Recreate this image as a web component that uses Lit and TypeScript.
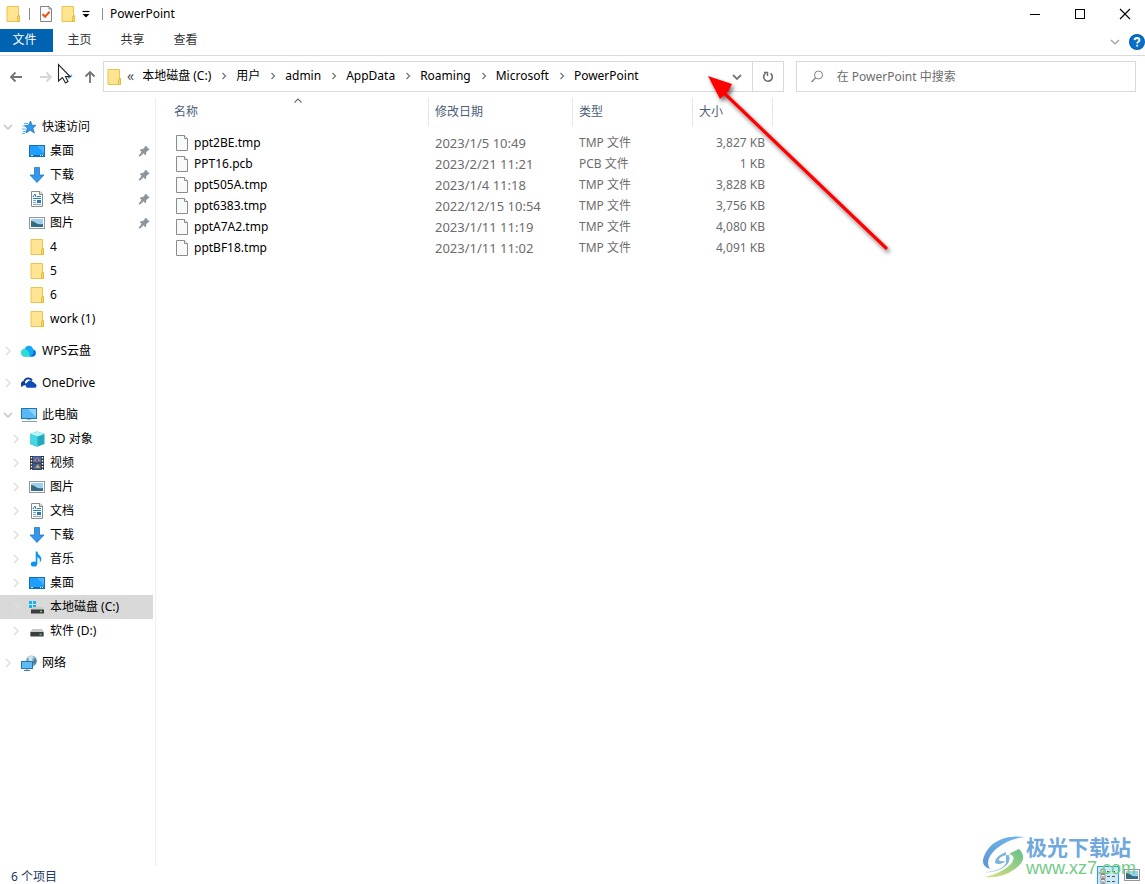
import { LitElement, html, svg, css, nothing } from "lit";
import { customElement, property, state } from "lit/decorators.js";
import { classMap } from "lit/directives/class-map.js";

type IconName =
  | "folder" | "check" | "star" | "desktop" | "down" | "doc" | "picture" | "wps" | "onedrive"
  | "pc" | "cube" | "video" | "music" | "drivec" | "drived" | "network" | "file" | "pin"
  | "back" | "forward" | "recent" | "up" | "chevDown" | "chevRight" | "chevUp" | "ribbon" | "refresh"
  | "search" | "min" | "max" | "close" | "help" | "menu" | "crumb" | "details" | "dropdown";

const ICONS: Record<IconName, unknown> = {
  folder: svg`<path d="M2 0.5H13.5V10L14.5 10V15.5H2Z" fill="#ffe491" stroke="#e8c64b"/><path d="M12.5 15.5V10.5L14.5 9.5V15.5Z" fill="#f7d868" stroke="#e3bd3d"/>`,
  check: svg`<path d="M2.5 0.5H11L13.5 3V15.5H2.5Z" fill="#fafafa" stroke="#858585"/><path d="M11 .5V3H13.5" fill="none" stroke="#858585"/><path d="M4.5 8L7 10.8L11.6 5.8" fill="none" stroke="#e8561c" stroke-width="2"/>`,
  star: svg`<path d="M9.5 2L11 6.2L15 6.4L11.8 9L13.4 14L9.2 11.2L5 14L6.4 9L3.4 6.6L7.6 6.2Z" fill="#2f9be8" stroke="#1d74c0" stroke-width=".8"/><path d="M3 4.5H7M1.5 7H5M1 10H5M2 12.5H5M1 14.5H4" stroke="#58b4f0" stroke-width="1"/>`,
  desktop: svg`<rect x=".5" y="2.500" width="15" height="11" fill="#1e9fff" stroke="#0f70b8"/><path d="M8 3H15V10Z" fill="#4db5ff"/><path d="M1 12.500H15" stroke="#0b6bb0"/><path d="M2 12.500H4M11 12.500H12M13 12.500H14" stroke="#fff"/>`,
  down: svg`<path d="M5.500 .5H10.500V8H15L8 15.500L1 8H5.500Z" fill="#3398ec" stroke="#2278c2" stroke-width=".8"/>`,
  doc: svg`<path d="M2.500 .5H11L13.500 3V15.500H2.500Z" fill="#fdfdfd" stroke="#8a8a8a"/><path d="M10.500 .5V3.500H13.500" fill="#ddd" stroke="#8a8a8a"/><path d="M4 6L6 3L7 6M8 5.500H12M4 7.500H12" stroke="#2283c6" fill="none"/><path d="M4 9.500H7M4 11.500H7M4 13.500H12" stroke="#87a5bd"/><rect x="8" y="9" width="4" height="3" fill="#2f78b5"/>`,
  picture: svg`<rect x=".5" y="2.500" width="15" height="11" fill="#fff" stroke="#969696"/><rect x="2" y="4" width="12" height="8" fill="#9bd0f3"/><path d="M2 6Q5 6 7 8T14 9V12H2Z" fill="#386f69"/><path d="M2 10.500Q8 9 14 10.500V12H2Z" fill="#326a9e"/>`,
  wps: svg`<path d="M4.500 13.500A3.800 3.800 0 0 1 3.600 6Q5 2.500 8.200 2.700Q11.500 3 12.200 6.500A3.600 3.600 0 0 1 11.800 13.500Z" fill="#14a9f6"/><path d="M4 13.500A3.700 3.700 0 0 1 3.500 6Q8 6 9 13.500Z" fill="#2edbd5"/><path d="M8 13.500Q14 12 12.300 6.600A3.600 3.600 0 0 1 12 13.500Z" fill="#0867df"/>`,
  onedrive: svg`<path d="M1.200 11.500A3 3 0 0 1 3 6.700Q4.300 3 8 3.500Q10 3.600 11 5.500" fill="none" stroke="#123f96" stroke-width="1.800"/><path d="M6 12.700A3 3 0 0 1 6 7.500Q8.500 4 11.800 7Q13 6.900 13.500 8.200A2.500 2.500 0 0 1 14.500 12.700Z" fill="#0b4db5"/><path d="M1 11A3 3 0 0 1 4 7L5 10Z" fill="#123f96"/>`,
  pc: svg`<rect x=".5" y="1.500" width="15" height="10" fill="#57b8f8" stroke="#2674a8"/><path d="M7 2H15V10Z" fill="#8fd2ff"/><path d="M6 12H10V13H6Z" fill="#a0b5c1"/><path d="M1 14.500H16" stroke="#7fa0b5"/>`,
  cube: svg`<path d="M1 3L8 .5L15.500 3V13L8 15.800L1 13Z" fill="#22a9bd"/><path d="M1 3L8 .5L15.500 3L8.500 5.500Z" fill="#b4f3f6"/><path d="M1 3L8.500 5.500V15.500L1 13Z" fill="#47d7e1"/>`,
  video: svg`<rect x="1" y="1" width="14" height="14" fill="#333"/><rect x="4" y="1.500" width="8" height="6" fill="#496fc5"/><rect x="4" y="8.500" width="8" height="6" fill="#365cb1"/><path d="M5 6L8 3L11 6ZM6 13L9 9L11 13Z" fill="#d6a52a"/><path d="M2.500 2V15M13.500 2V15" stroke="#fff" stroke-width="1.400" stroke-dasharray="1.500 1.500"/><path d="M7 4H9V6H7Z" fill="#b93b34"/>`,
  music: svg`<ellipse cx="5" cy="13" rx="3.200" ry="2.600" fill="#0a95f0"/><path d="M6.700 13V.5H8.400Q8.500 3 11 4.800Q14 8 10.500 12Q12 7.500 8.400 6V13Z" fill="#0a95f0"/>`,
  drivec: svg`<path d="M0 2H3V5H0ZM4 2H7V5H4ZM0 6H3V9H0ZM4 6H7V9H4Z" fill="#12b4ef"/><path d="M2 10L4 8H13L15 10.500V14H2Z" fill="#c9c9c9"/><rect x="2" y="10.500" width="13" height="4" fill="#393d3f"/><path d="M11 12.500H13" stroke="#5dd15a" stroke-width="1.500"/>`,
  drived: svg`<path d="M1 9L3.500 6H13L15 9V13H1Z" fill="#c9c9c9"/><rect x="1.500" y="9" width="13" height="4.500" fill="#3b3e40"/><path d="M10.500 11.500H12.500" stroke="#5dd15a" stroke-width="1.500"/>`,
  network: svg`<circle cx="10.500" cy="6" r="5.500" fill="#7fa9c3"/><path d="M7 2Q10 0 13 2L11 4L12 7L9 9L8 5Z" fill="#cfe5ed"/><path d="M14 3Q17 7 13 10L12 7Z" fill="#477e9d"/><rect x=".5" y="6.500" width="11" height="7" fill="#5bbdf9" stroke="#2775ab"/><path d="M3 15.500H9M6 13V15" stroke="#397eac"/>`,
  file: svg`<path d="M2.500 .5H10.500L13.500 3.500V15.500H2.500Z" fill="#f8f9fb" stroke="#8b8b8b"/><path d="M10.500 .5V3.500H13.500" fill="#fff" stroke="#8b8b8b"/>`,
  pin: svg`<path d="M9.500 3L13 6.500L11.800 7L9.800 9L9.500 11.800L7.500 10L3.800 13.200L3 13L6.200 8.800L4.300 7L7 6.500L9 4.500Z" fill="#8a949e" stroke="#8a949e" stroke-linejoin="round"/>`,
  back: svg`<path d="M14 8H3M7.500 3.500L3 8L7.500 12.500" fill="none" stroke="#737373" stroke-width="1.800"/>`,
  forward: svg`<path d="M2 8H13M8.500 3.500L13 8L8.500 12.500" fill="none" stroke="#d6d6d6" stroke-width="1.800"/>`,
  recent: svg`<path d="M5 6L8 9L11 6" fill="none" stroke="#4a9ae8" stroke-width="1.500"/>`,
  up: svg`<path d="M8 14V3M3.500 7.500L8 3L12.500 7.500" fill="none" stroke="#737373" stroke-width="1.800"/>`,
  chevDown: svg`<path d="M4 6L8 10L12 6" fill="none" stroke="#c4c4c4" stroke-width="1.500"/>`,
  chevRight: svg`<path d="M6 4L10 8L6 12" fill="none" stroke="#dedede" stroke-width="1.500"/>`,
  chevUp: svg`<path d="M4.500 9.500L8 6L11.500 9.500" fill="none" stroke="#6a6a6a" stroke-width="1.100"/>`,
  ribbon: svg`<path d="M4 6L8 10L12 6" fill="none" stroke="#9b9b9b" stroke-width="1.200"/>`,
  dropdown: svg`<path d="M4 6L8 10L12 6" fill="none" stroke="#777" stroke-width="1.800"/>`,
  refresh: svg`<path d="M10.600 4.500A4.300 4.300 0 1 1 5.500 4.400" fill="none" stroke="#6d6d6d" stroke-width="1.600"/><path d="M4 3.500H7.500V7" fill="none" stroke="#6d6d6d" stroke-width="1.500"/>`,
  search: svg`<circle cx="9.500" cy="6" r="4" fill="none" stroke="#857f86"/><path d="M6.500 9L2.500 13" stroke="#857f86" stroke-width="1.200"/>`,
  min: svg`<path d="M3 8.500H13" stroke="#000"/>`,
  max: svg`<rect x="3.500" y="3.500" width="9" height="9" fill="none" stroke="#000"/>`,
  close: svg`<path d="M3 3L13 13M13 3L3 13" stroke="#000" stroke-width="1.100"/>`,
  help: svg`<circle cx="8" cy="8" r="8" fill="#0063b1"/><circle cx="8" cy="8" r="6.800" fill="#0a6fca"/><path d="M5.500 6.200Q5.700 4 8.100 4Q10.500 4.100 10.500 6.100Q10.400 7.200 9.100 7.900Q8.200 8.500 8.200 9.500M8.200 10.800V12.500" fill="none" stroke="#fff" stroke-width="1.800"/>`,
  menu: svg`<path d="M4.500 5.500H11.500" stroke="#000" stroke-width="1.200"/><path d="M4.500 8H11.500L8 11.500Z" fill="#000"/>`,
  crumb: svg`<path d="M6.500 5L9.500 8L6.500 11" fill="none" stroke="#777" stroke-width="1.300"/>`,
  details: svg`<path d="M1 1.500H5V5.500H1ZM1 6.500H5V10.500H1ZM1 11.500H5V15.500H1Z" fill="#fff" stroke="#8b8b8b"/><path d="M3 3V5" stroke="#4a9d43"/><path d="M3 8V10" stroke="#c43e3e"/><path d="M3 13V15" stroke="#3970b7"/><path d="M7 3.500H10M12 3.500H15M7 8.500H10M12 8.500H15M7 13.500H10M12 13.500H15" stroke="#555"/>`,
};

const icon = (name: IconName) =>
  html`<svg class="icon" viewBox="0 0 16 16" width="16" height="16" aria-hidden="true">${ICONS[name]}</svg>`;

interface NavItem {
  label: string;
  icon: IconName;
  level: 0 | 1;
  arrow?: "open" | "closed";
  pinned?: boolean;
}

const GROUPS: NavItem[][] = [
  [
    { label: "快速访问", icon: "star", level: 0, arrow: "open" },
    { label: "桌面", icon: "desktop", level: 1, pinned: true },
    { label: "下载", icon: "down", level: 1, pinned: true },
    { label: "文档", icon: "doc", level: 1, pinned: true },
    { label: "图片", icon: "picture", level: 1, pinned: true },
    { label: "4", icon: "folder", level: 1 },
    { label: "5", icon: "folder", level: 1 },
    { label: "6", icon: "folder", level: 1 },
    { label: "work (1)", icon: "folder", level: 1 },
  ],
  [{ label: "WPS云盘", icon: "wps", level: 0, arrow: "closed" }],
  [{ label: "OneDrive", icon: "onedrive", level: 0, arrow: "closed" }],
  [
    { label: "此电脑", icon: "pc", level: 0, arrow: "open" },
    { label: "3D 对象", icon: "cube", level: 1, arrow: "closed" },
    { label: "视频", icon: "video", level: 1, arrow: "closed" },
    { label: "图片", icon: "picture", level: 1, arrow: "closed" },
    { label: "文档", icon: "doc", level: 1, arrow: "closed" },
    { label: "下载", icon: "down", level: 1, arrow: "closed" },
    { label: "音乐", icon: "music", level: 1, arrow: "closed" },
    { label: "桌面", icon: "desktop", level: 1, arrow: "closed" },
    { label: "本地磁盘 (C:)", icon: "drivec", level: 1, arrow: "closed" },
    { label: "软件 (D:)", icon: "drived", level: 1, arrow: "closed" },
  ],
  [{ label: "网络", icon: "network", level: 0, arrow: "closed" }],
];

const FILES = [
  ["ppt2BE.tmp", "2023/1/5 10:49", "TMP 文件", "3,827 KB"],
  ["PPT16.pcb", "2023/2/21 11:21", "PCB 文件", "1 KB"],
  ["ppt505A.tmp", "2023/1/4 11:18", "TMP 文件", "3,828 KB"],
  ["ppt6383.tmp", "2022/12/15 10:54", "TMP 文件", "3,756 KB"],
  ["pptA7A2.tmp", "2023/1/11 11:19", "TMP 文件", "4,080 KB"],
  ["pptBF18.tmp", "2023/1/11 11:02", "TMP 文件", "4,091 KB"],
];

const CRUMBS = ["本地磁盘 (C:)", "用户", "admin", "AppData", "Roaming", "Microsoft", "PowerPoint"];

const base = css`
  * { box-sizing: border-box; }
  button, input { font: inherit; color: inherit; background: none; border: 0; padding: 0; margin: 0; }
  a { color: inherit; text-decoration: none; }
  .icon { display: block; flex: none; }
`;

@customElement("nav-tree")
class NavTree extends LitElement {
  @state() private selected = "本地磁盘 (C:)";

  static styles = [base, css`
    :host { display: block; padding-top: 17px; }
    ul { list-style: none; margin: 0 0 8px; padding: 0; }
    .row { display: flex; align-items: center; height: 24px; margin-right: 2px; padding-right: 1px; }
    .row.child { padding-left: 8px; }
    .row.selected { background: #d9d9d9; }
    .twist { width: 16px; height: 16px; flex: none; }
    .link { display: flex; align-items: center; gap: 5px; flex: 1; padding-left: 5px; white-space: nowrap; }
  `];

  render() {
    return html`<nav aria-label="导航窗格">
      ${GROUPS.map((g) => html`<ul>${g.map((i) => html`
        <li class=${classMap({ row: true, child: i.level === 1, selected: i.label === this.selected })}>
          ${i.arrow
            ? html`<button class="twist" aria-label="展开">${icon(i.arrow === "open" ? "chevDown" : "chevRight")}</button>`
            : html`<span class="twist"></span>`}
          <a class="link" href="#" @click=${(e: Event) => { e.preventDefault(); this.selected = i.label; }}>
            ${icon(i.icon)}<span>${i.label}</span>
          </a>
          ${i.pinned ? icon("pin") : nothing}
        </li>`)}</ul>`)}
    </nav>`;
  }
}

@customElement("file-list")
class FileList extends LitElement {
  @property({ type: Array }) files: string[][] = [];

  static styles = [base, css`
    :host { display: block; padding-left: 12px; }
    table { border-collapse: separate; border-spacing: 0; table-layout: fixed; width: 605px; }
    .c-name { width: 261px; }
    .c-date { width: 144px; }
    .c-type { width: 120px; }
    .c-size { width: 80px; }
    th { position: relative; height: 28px; padding: 0 6px; text-align: left; font-weight: 400; color: #4c607a; border-right: 1px solid #e5e5e5; }
    .sort { position: absolute; top: -5px; left: calc(50% - 8px); }
    tbody::before { content: ""; display: block; height: 6px; }
    td { height: 21px; padding: 0 6px; color: #6d6d6d; white-space: nowrap; }
    td.name { color: #000; }
    td.date { font-size: 13px; }
    td.size { text-align: right; padding-right: 8px; }
    .file { display: flex; align-items: center; gap: 4px; }
  `];

  render() {
    return html`<table>
      <colgroup><col class="c-name"><col class="c-date"><col class="c-type"><col class="c-size"></colgroup>
      <thead><tr>
        <th scope="col">名称<span class="sort">${icon("chevUp")}</span></th>
        <th scope="col">修改日期</th><th scope="col">类型</th><th scope="col">大小</th>
      </tr></thead>
      <tbody>${this.files.map(([n, d, t, s]) => html`<tr>
        <td class="name"><span class="file">${icon("file")}<span>${n}</span></span></td>
        <td class="date">${d}</td><td>${t}</td><td class="size">${s}</td>
      </tr>`)}</tbody>
    </table>`;
  }
}

@customElement("app-root")
class AppRoot extends LitElement {
  static styles = [base, css`
    :host {
      display: flex; flex-direction: column; position: relative; min-height: 100vh; overflow: hidden;
      background: #fff; color: #000;
      font: 12px/16px "Noto Sans", "Noto Sans CJK SC", sans-serif;
    }
    .title { display: flex; align-items: center; height: 28px; padding-left: 5px; }
    .sep { width: 1px; height: 12px; background: #8c8c8c; }
    .quick { display: flex; align-items: center; gap: 8px; }
    .quick .tools { display: flex; gap: 6px; }
    .tools .menu { margin-left: -4px; }
    h1 { flex: 1; margin: 0 0 0 7px; font-size: 12px; font-weight: 400; }
    .wins { display: flex; gap: 5px; }
    .wins button { display: grid; place-items: center; width: 40px; height: 28px; }
    .ribbon { display: flex; align-items: flex-start; height: 28px; padding-top: 1px; border-bottom: 1px solid #dadbdc; }
    .tab { width: 53px; height: 23px; color: #333; padding-bottom: 1px; }
    .tab.file { background: #0063b1; color: #fff; padding-right: 4px; }
    .side { display: flex; align-items: center; gap: 6px; margin-left: auto; height: 26px; }
    .bar { display: flex; align-items: center; padding: 5px 9px 6px 1px; }
    .moves { display: flex; width: 102px; flex: none; }
    .moves button { display: grid; place-items: center; width: 30px; }
    .moves .narrow { width: 16px; }
    .moves .upper { width: 26px; }
    .fields { display: grid; grid-template-columns: 2fr 1fr; gap: 12px; flex: 1; }
    .box { display: flex; align-items: center; height: 31px; border: 1px solid #d9d9d9; min-width: 0; }
    .address { padding-left: 2px; }
    .crumbs { display: flex; align-items: center; flex: 1; margin: 0; padding: 0 0 2px; list-style: none; white-space: nowrap; }
    .crumbs li { display: flex; align-items: center; }
    .crumbs .icon { margin: 0 4px 0 5px; }
    .more { margin: 0 8px 2px 5px; color: #555; font-size: 14px; }
    .box button { display: grid; place-items: center; height: 29px; width: 30px; }
    .box .reload { width: 31px; border-left: 1px solid #d9d9d9; }
    .search { padding: 0 12px; gap: 12px; }
    .search input { flex: 1; min-width: 0; outline: 0; }
    .search input::placeholder { color: #6d6d6d; opacity: 1; }
    .body { display: flex; flex: 1; padding-top: 0; }
    nav-tree { width: 156px; flex: none; border-right: 1px solid #f0f0f0; }
    file-list { flex: 1; }
    .status { display: flex; align-items: flex-end; justify-content: space-between; height: 18px; padding: 0 4px 0 11px; color: #1e395b; }
    .status p { margin: 0; line-height: 14px; }
    .views { display: flex; gap: 4px; }
    .views button { display: grid; place-items: center; width: 18px; height: 18px; }
    .views .on { width: 22px; border: 1px solid #26a0da; border-bottom: 0; background: #cbe8f6; }
    .overlay { position: absolute; pointer-events: none; }
    .pointer { left: 54px; top: 61px; }
    .callout { left: 696px; top: 64px; }
    .mark { right: 9px; bottom: 6px; display: flex; align-items: center; gap: 1px; }
    .mark p { margin: 0; white-space: nowrap; }
    .mark .cn { font: 700 21px/24px "Noto Sans CJK SC", sans-serif; color: #6fa8dc; }
    .mark .url { font: 18px/20px "Liberation Sans", sans-serif; color: #72cc86; }
  `];

  render() {
    return html`
      <header class="title">
        <div class="quick">
          ${icon("folder")}<span class="sep"></span>
          <div class="tools">
            <button aria-label="属性">${icon("check")}</button>
            <button aria-label="新建文件夹">${icon("folder")}</button>
            <button class="menu" aria-label="自定义快速访问工具栏">${icon("menu")}</button>
          </div>
          <span class="sep"></span>
        </div>
        <h1>PowerPoint</h1>
        <div class="wins">
          <button aria-label="最小化">${icon("min")}</button>
          <button aria-label="最大化">${icon("max")}</button>
          <button aria-label="关闭">${icon("close")}</button>
        </div>
      </header>
      <div class="ribbon">
        <button class="tab file">文件</button>
        <button class="tab">主页</button>
        <button class="tab">共享</button>
        <button class="tab">查看</button>
        <div class="side">
          <button aria-label="展开功能区">${icon("ribbon")}</button>
          <button aria-label="帮助">${icon("help")}</button>
        </div>
      </div>
      <div class="bar">
        <div class="moves">
          <button aria-label="返回">${icon("back")}</button>
          <button aria-label="前进">${icon("forward")}</button>
          <button class="narrow" aria-label="最近浏览的位置">${icon("recent")}</button>
          <button class="upper" aria-label="上移">${icon("up")}</button>
        </div>
        <div class="fields">
          <div class="box address">
            ${icon("folder")}<span class="more">«</span>
            <ol class="crumbs">${CRUMBS.map((c, i) => html`<li>${i ? icon("crumb") : nothing}<a href="#">${c}</a></li>`)}</ol>
            <button aria-label="以前的位置">${icon("dropdown")}</button>
            <button class="reload" aria-label="刷新">${icon("refresh")}</button>
          </div>
          <label class="box search">${icon("search")}<input type="search" aria-label="搜索" placeholder="在 PowerPoint 中搜索"></label>
        </div>
      </div>
      <main class="body">
        <nav-tree></nav-tree>
        <file-list .files=${FILES}></file-list>
      </main>
      <footer class="status">
        <p>${FILES.length} 个项目</p>
        <div class="views">
          <button class="on" aria-label="详细信息">${icon("details")}</button>
          <button aria-label="大图标">${icon("picture")}</button>
        </div>
      </footer>
      <svg class="overlay pointer" width="20" height="26" viewBox="0 0 20 26" aria-hidden="true">
        <path d="M4.500 3.500V20L8.500 16.500L11.500 22L14 20.500L11.500 15.500H16Z" fill="#fff" stroke="#222" stroke-width="1.100"/>
      </svg>
      <svg class="overlay callout" width="204" height="198" viewBox="0 0 204 198" aria-hidden="true">
        <defs><filter id="shade" x="-10%" y="-10%" width="125%" height="125%">
          <feDropShadow dx="2" dy="3" stdDeviation="2" flood-color="#000" flood-opacity=".55"/>
        </filter></defs>
        <g filter="url(#shade)">
          <path d="M27 28L190 184" stroke="#f00" stroke-width="3.200" stroke-linecap="round"/>
          <path d="M12 12L36 20L32 28L24 35Z" fill="#f00"/>
        </g>
      </svg>
      <div class="overlay mark">
        <svg width="43" height="43" viewBox="0 0 43 43" aria-hidden="true">
          <defs>
            <linearGradient id="sky" x1="1" y1="0" x2="0" y2="1"><stop offset="0" stop-color="#70baf0"/><stop offset="1" stop-color="#5f94d4"/></linearGradient>
            <linearGradient id="leaf" x1="1" y1="0" x2="0" y2="1"><stop offset="0" stop-color="#63c18b"/><stop offset="1" stop-color="#dfe07a"/></linearGradient>
          </defs>
          <path d="M43 2Q18 -1 6 14Q-5 30 8 34Q2 25 14 14Q25 4 43 2Z" fill="url(#sky)"/>
          <path d="M24 17Q12 22 13 28Q18 31 24 26Q16 27 17 24Q20 20 27 20Q30 28 19 34Q11 38 3 37Q20 36 24 28Z" fill="#7ab4df"/>
          <path d="M37 14Q47 24 33 34Q19 44 3 42Q20 38 29 29Q35 21 27 19Q32 16 37 14Z" fill="url(#leaf)"/>
        </svg>
        <div><p class="cn">极光下载站</p><p class="url">www.xz7.com</p></div>
      </div>
    `;
  }
}
